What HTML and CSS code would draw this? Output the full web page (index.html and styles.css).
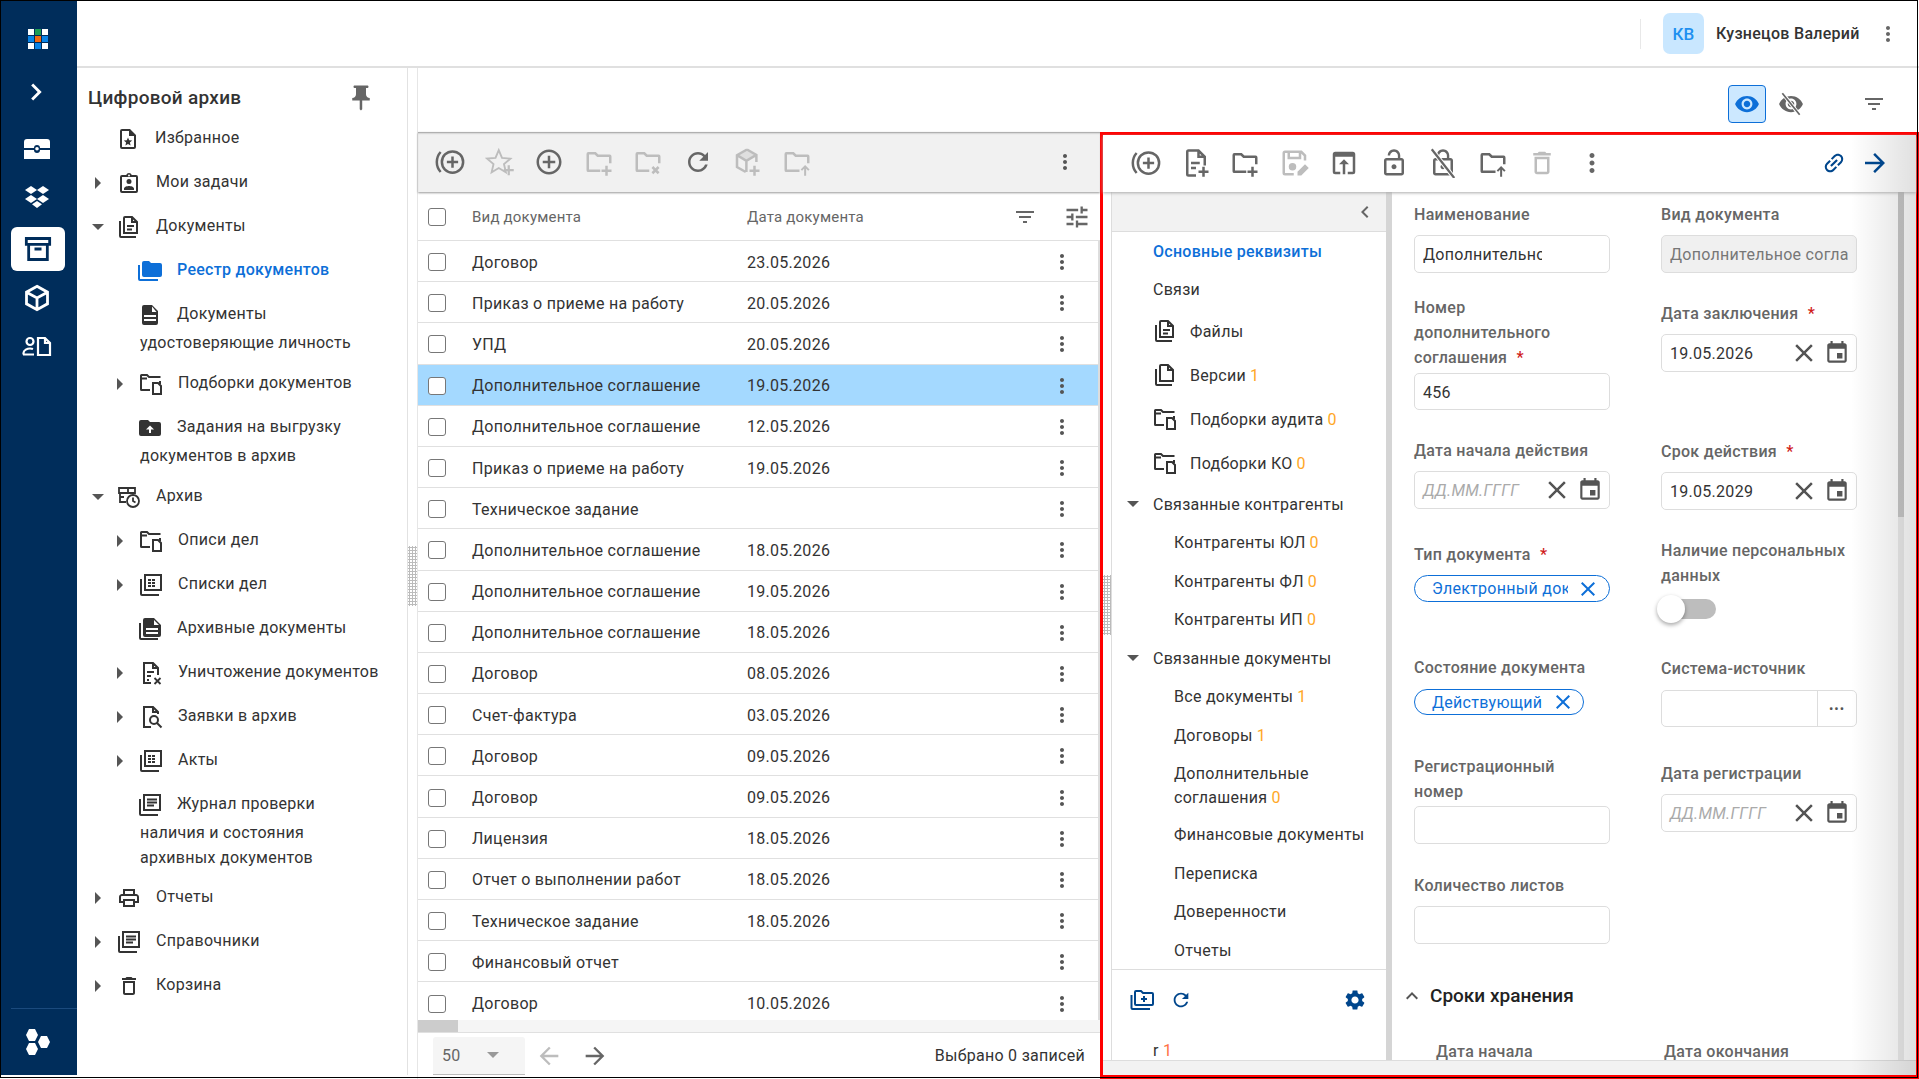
FILE: index.html
```html
<!DOCTYPE html>
<html lang="ru">
<head>
    <meta charset="UTF-8">
    <title>Цифровой архив</title>
    <link rel="stylesheet" href="styles.css">
</head>
<body>
    <svg class="sprite" xmlns="http://www.w3.org/2000/svg">
        <symbol id="i-kebab" viewBox="0 0 24 24"><path d="M12 8c1.1 0 2-.9 2-2s-.9-2-2-2-2 .9-2 2 .9 2 2 2zm0 2c-1.1 0-2 .9-2 2s.9 2 2 2 2-.9 2-2-.9-2-2-2zm0 6c-1.1 0-2 .9-2 2s.9 2 2 2 2-.9 2-2-.9-2-2-2z"/></symbol>
        <symbol id="i-filter" viewBox="0 0 24 24"><path d="M10 18h4v-2h-4v2zM3 6v2h18V6H3zm3 7h12v-2H6v2z"/></symbol>
        <symbol id="i-tune" viewBox="0 0 24 24"><path d="M3 17v2h6v-2H3zM3 5v2h10V5H3zm10 16v-2h8v-2h-8v-2h-2v6h2zM7 9v2H3v2h4v2h2V9H7zm14 4v-2H11v2h10zm-6-4h2V7h4V5h-4V3h-2v6z"/></symbol>
        <symbol id="i-eye" viewBox="0 0 24 24"><path d="M12 4.500C7 4.500 2.730 7.610 1 12c1.730 4.390 6 7.500 11 7.500s9.270-3.110 11-7.500c-1.730-4.390-6-7.500-11-7.500zM12 17c-2.760 0-5-2.240-5-5s2.240-5 5-5 5 2.240 5 5-2.240 5-5 5zm0-8c-1.660 0-3 1.340-3 3s1.340 3 3 3 3-1.340 3-3-1.340-3-3-3z"/></symbol>
        <symbol id="i-eye-off" viewBox="0 0 24 24"><path d="M12 4.500C7 4.500 2.730 7.610 1 12c1.730 4.390 6 7.500 11 7.500s9.270-3.110 11-7.500c-1.730-4.390-6-7.500-11-7.500zM12 17c-2.760 0-5-2.240-5-5s2.240-5 5-5 5 2.240 5 5-2.240 5-5 5zm0-8c-1.660 0-3 1.340-3 3s1.340 3 3 3 3-1.340 3-3-1.340-3-3-3z"/><path d="M4.500 2.500l15 19" fill="none" stroke="#fff" stroke-width="3.400"/><path d="M4 2l16 20" fill="none" stroke="currentColor" stroke-width="1.600"/></symbol>
        <symbol id="i-arrow-right" viewBox="0 0 24 24"><path d="M12 4l-1.410 1.410L16.170 11H4v2h12.170l-5.580 5.590L12 20l8-8z"/></symbol>
        <symbol id="i-arrow-left" viewBox="0 0 24 24"><path d="M20 11H7.830l5.590-5.590L12 4l-8 8 8 8 1.410-1.410L7.830 13H20v-2z"/></symbol>
        <symbol id="i-close" viewBox="0 0 24 24"><path d="M19 6.410L17.590 5 12 10.590 6.410 5 5 6.410 10.590 12 5 17.590 6.410 19 12 13.410 17.590 19 19 17.590 13.410 12z"/></symbol>
        <symbol id="i-refresh" viewBox="0 0 24 24"><path d="M17.650 6.350C16.200 4.900 14.210 4 12 4c-4.420 0-7.990 3.580-7.990 8s3.570 8 7.990 8c3.730 0 6.840-2.550 7.730-6h-2.080c-.82 2.330-3.040 4-5.650 4-3.310 0-6-2.690-6-6s2.690-6 6-6c1.660 0 3.140.69 4.220 1.780L13 11h7V4l-2.350 2.350z"/></symbol>
        <symbol id="i-gear" viewBox="0 0 24 24"><path d="M19.140 12.940c.04-.3.06-.61.06-.94 0-.32-.02-.64-.07-.94l2.030-1.580c.18-.14.23-.41.12-.61l-1.920-3.320c-.12-.22-.37-.29-.59-.22l-2.390.96c-.5-.38-1.030-.7-1.620-.94l-.36-2.540c-.04-.24-.24-.41-.48-.41h-3.840c-.24 0-.43.17-.47.41l-.36 2.540c-.59.24-1.130.57-1.620.94l-2.390-.96c-.22-.08-.47 0-.59.22L2.740 8.870c-.12.21-.08.47.12.61l2.030 1.580c-.05.3-.09.63-.09.94s.02.64.07.94l-2.030 1.580c-.18.14-.23.41-.12.61l1.920 3.320c.12.22.37.29.59.22l2.390-.96c.5.38 1.030.7 1.620.94l.36 2.540c.05.24.24.41.48.41h3.840c.24 0 .44-.17.47-.41l.36-2.540c.59-.24 1.130-.56 1.620-.94l2.390.96c.22.08.47 0 .59-.22l1.920-3.320c.12-.22.07-.47-.12-.61l-2.010-1.580zM12 15.600c-1.980 0-3.600-1.620-3.600-3.600s1.620-3.600 3.600-3.600 3.600 1.620 3.600 3.600-1.620 3.600-3.600 3.600z"/></symbol>
        <symbol id="i-pin" viewBox="0 0 24 24"><path d="M16 9V4h1c.55 0 1-.45 1-1s-.45-1-1-1H7c-.55 0-1 .45-1 1s.45 1 1 1h1v5c0 1.660-1.340 3-3 3v2h5.970v7l1 1 1-1v-7H19v-2c-1.660 0-3-1.340-3-3z"/></symbol>
        <symbol id="i-event" viewBox="0 0 24 24"><path d="M17 12h-5v5h5v-5zM16 1v2H8V1H6v2H5c-1.110 0-1.990.9-1.990 2L3 19c0 1.100.89 2 2 2h14c1.100 0 2-.9 2-2V5c0-1.100-.9-2-2-2h-1V1h-2zm3 18H5V8h14v11z"/></symbol>
        <symbol id="i-link" viewBox="0 0 24 24"><g transform="rotate(-45 12 12)"><path d="M3.900 12c0-1.710 1.390-3.100 3.100-3.100h4V7H7c-2.760 0-5 2.240-5 5s2.240 5 5 5h4v-1.900H7c-1.710 0-3.100-1.390-3.100-3.100zM8 13h8v-2H8v2zm9-6h-4v1.900h4c1.710 0 3.100 1.390 3.100 3.100s-1.390 3.100-3.100 3.100h-4V17h4c2.760 0 5-2.240 5-5s-2.240-5-5-5z"/></g></symbol>
        <symbol id="i-caret-down" viewBox="0 0 24 24"><path d="M6 9l6 6 6-6z"/></symbol>
        <symbol id="i-caret-right" viewBox="0 0 24 24"><path d="M9 6l6 6-6 6z"/></symbol>
        <symbol id="i-star-add" viewBox="0 0 24 24"><path d="M11 2.500l2.600 6.200 6.700.6-5.100 4.400 1.500 6.500-5.700-3.400-5.700 3.400 1.500-6.500L1.700 9.300l6.700-.6z" fill="none" stroke="currentColor" stroke-width="1.500"/><path d="M19 14.500v8M15 18.500h8" fill="none" stroke="currentColor" stroke-width="1.800"/></symbol>
        <symbol id="i-ring-add" viewBox="0 0 24 24"><g fill="none" stroke="currentColor" stroke-width="2"><circle cx="14" cy="12" r="8.500"/><path d="M14 7.500v9M9.500 12h9M4.500 4a12 12 0 0 0 0 16"/></g></symbol>
        <symbol id="i-circle-add" viewBox="0 0 24 24"><path d="M13 7h-2v4H7v2h4v4h2v-4h4v-2h-4V7zm-1-5C6.480 2 2 6.480 2 12s4.480 10 10 10 10-4.480 10-10S17.520 2 12 2zm0 18c-4.410 0-8-3.590-8-8s3.590-8 8-8 8 3.590 8 8-3.590 8-8 8z"/></symbol>
        <symbol id="i-folder-add" viewBox="0 0 24 24"><g fill="none" stroke="currentColor" stroke-width="2"><path d="M13 19H3.500a.5.500 0 0 1-.5-.5V5.500a.5.500 0 0 1 .5-.5H9l2 2h9.500a.5.500 0 0 1 .5.500V13"/><path d="M18 15v8M14 19h8"/></g></symbol>
        <symbol id="i-folder-x" viewBox="0 0 24 24"><g fill="none" stroke="currentColor" stroke-width="2"><path d="M13 19H3.500a.5.500 0 0 1-.5-.5V5.500a.5.500 0 0 1 .5-.5H9l2 2h9.500a.5.500 0 0 1 .5.500V13"/><path d="M15.500 16l5 5M20.500 16l-5 5"/></g></symbol>
        <symbol id="i-folder-up" viewBox="0 0 24 24"><g fill="none" stroke="currentColor" stroke-width="2"><path d="M14 19H3.500a.5.500 0 0 1-.5-.5V5.500a.5.500 0 0 1 .5-.5H9l2 2h9.500a.5.500 0 0 1 .5.500V13"/><path d="M18.500 23v-7M15.500 18.500l3-3 3 3" stroke-width="1.600"/></g></symbol>
        <symbol id="i-box-add" viewBox="0 0 24 24"><g fill="none" stroke="currentColor" stroke-width="2"><path d="M12 2l7.500 4.300V12M12 2L4 6.500v9.500l7 4M4 6.500l7.500 4.500 8-4.700M11.500 11v9"/></g><path d="M12 2l7.500 4.300-8 4.700L4 6.500z" fill="currentColor" opacity=".35"/><path d="M18 15v8M14 19h8" fill="none" stroke="currentColor" stroke-width="2"/></symbol>
        <symbol id="i-doc-add" viewBox="0 0 24 24"><g fill="none" stroke="currentColor" stroke-width="2"><path d="M12 22H6a1 1 0 0 1-1-1V3a1 1 0 0 1 1-1h8l5 5v7M14 2v5h5M8 12h7M8 16h4M18 15v8M14 19h8"/></g></symbol>
        <symbol id="i-save-edit" viewBox="0 0 24 24"><g fill="none" stroke="currentColor" stroke-width="2"><path d="M11 21H4a1 1 0 0 1-1-1V4a1 1 0 0 1 1-1h13l3 3v4M7 3v5h9V3"/></g><circle cx="10" cy="15" r="3" fill="currentColor"/><path d="M14 22v-3l6-6 3 3-6 6z" fill="currentColor"/></symbol>
        <symbol id="i-upload" viewBox="0 0 24 24"><path d="M19 3H5a2 2 0 0 0-2 2v14a2 2 0 0 0 2 2h4v-2H5V7h14v12h-4v2h4a2 2 0 0 0 2-2V5a2 2 0 0 0-2-2zm-7 6l-4 4h3v8h2v-8h3z"/></symbol>
        <symbol id="i-lock-open" viewBox="0 0 24 24"><path d="M12 17c1.100 0 2-.9 2-2s-.9-2-2-2-2 .9-2 2 .9 2 2 2zm6-9h-1V6c0-2.760-2.240-5-5-5S7 3.240 7 6h1.900c0-1.710 1.390-3.100 3.100-3.100 1.710 0 3.100 1.390 3.100 3.100v2H6c-1.100 0-2 .9-2 2v10c0 1.100.9 2 2 2h12c1.100 0 2-.9 2-2V10c0-1.100-.9-2-2-2zm0 12H6V10h12v10z"/></symbol>
        <symbol id="i-lock-off" viewBox="0 0 24 24"><path d="M12 17c1.100 0 2-.9 2-2s-.9-2-2-2-2 .9-2 2 .9 2 2 2zm6-9h-1V6c0-2.760-2.240-5-5-5S7 3.240 7 6v2H6c-1.100 0-2 .9-2 2v10c0 1.100.9 2 2 2h12c1.100 0 2-.9 2-2V10c0-1.100-.9-2-2-2zM8.900 6c0-1.710 1.390-3.100 3.100-3.100s3.100 1.390 3.100 3.100v2H8.900V6zM18 20H6V10h12v10z"/><path d="M3 1l18 23" fill="none" stroke="#fff" stroke-width="3.500"/><path d="M3 1l18 23" fill="none" stroke="currentColor" stroke-width="1.800"/></symbol>
        <symbol id="i-trash" viewBox="0 0 24 24"><path d="M6 19c0 1.100.9 2 2 2h8c1.100 0 2-.9 2-2V7H6v12zM8 9h8v10H8V9zm7.500-5l-1-1h-5l-1 1H5v2h14V4z"/></symbol>
        <symbol id="i-print" viewBox="0 0 24 24"><path d="M19 8h-1V3H6v5H5c-1.660 0-3 1.340-3 3v6h4v4h12v-4h4v-6c0-1.660-1.340-3-3-3zM8 5h8v3H8V5zm8 12v2H8v-4h8v2zm2-2v-2H6v2H4v-4c0-.55.45-1 1-1h14c.55 0 1 .45 1 1v4h-2z"/></symbol>
        <symbol id="i-doc-star" viewBox="0 0 24 24"><path d="M14 2H6a2 2 0 0 0-2 2v16a2 2 0 0 0 2 2h12a2 2 0 0 0 2-2V8zm4 18H6V4h7v5h5z"/><path d="M12 10.500l1.200 2.800 3 .2-2.300 2 .7 2.900-2.600-1.500-2.600 1.500.7-2.900-2.300-2 3-.2z"/></symbol>
        <symbol id="i-clipboard" viewBox="0 0 24 24"><path d="M19 4h-4.200a3 3 0 0 0-5.600 0H5a2 2 0 0 0-2 2v14a2 2 0 0 0 2 2h14a2 2 0 0 0 2-2V6a2 2 0 0 0-2-2zm-7-.5a1 1 0 1 1 0 2 1 1 0 0 1 0-2zM19 20H5V6h14zM12 8a2.500 2.500 0 1 0 0 5 2.500 2.500 0 0 0 0-5zm-5 9.500V19h10v-1.500c0-1.700-3.300-2.500-5-2.500s-5 .8-5 2.500z"/></symbol>
        <symbol id="i-docs" viewBox="0 0 24 24"><g fill="none" stroke="currentColor" stroke-width="2"><path d="M3 6v15a1 1 0 0 0 1 1h15M8 2h7l5 5v11H7V3a1 1 0 0 1 1-1zM15 2v5h5"/><path d="M10 11h7M10 14.500h5"/></g></symbol>
        <symbol id="i-page" viewBox="0 0 24 24"><g fill="none" stroke="currentColor" stroke-width="2"><path d="M3 6v15a1 1 0 0 0 1 1h15M8 2h7l5 5v11H7V3a1 1 0 0 1 1-1zM15 2v5h5"/></g></symbol>
        <symbol id="i-folders-solid" viewBox="0 0 24 24"><path d="M2 6H0v14a2 2 0 0 0 2 2h18v-2H2z"/><path d="M22 4H13l-2-2H6a2 2 0 0 0-2 2v12a2 2 0 0 0 2 2h16a2 2 0 0 0 2-2V6a2 2 0 0 0-2-2z"/></symbol>
        <symbol id="i-doc-solid" viewBox="0 0 24 24"><path d="M14 2H6a2 2 0 0 0-2 2v16a2 2 0 0 0 2 2h12a2 2 0 0 0 2-2V8zm-8 16v-2h12v2zm0-4v-2h12v2zm8-5V3.500L18.500 9z"/></symbol>
        <symbol id="i-folder-doc" viewBox="0 0 24 24"><g fill="none" stroke="currentColor" stroke-width="2"><path d="M11 18H2.500a.5.500 0 0 1-.5-.5V3.500a.5.500 0 0 1 .5-.5H8l2 2h11.500M2 6.500h6M21 9v3"/><path d="M14 11h5l3 3v8h-8z"/></g></symbol>
        <symbol id="i-folder-up-solid" viewBox="0 0 24 24"><path d="M10 4H3a2 2 0 0 0-2 2v12a2 2 0 0 0 2 2h18a2 2 0 0 0 2-2V8a2 2 0 0 0-2-2H12zM12 9.500l4 4h-3V17h-2v-3.500H8z"/></symbol>
        <symbol id="i-archive-clock" viewBox="0 0 24 24"><g fill="none" stroke="currentColor" stroke-width="1.800"><path d="M2 3h16v5H2zM3 8v9h6M7 12H3M11 3v5"/><circle cx="16" cy="16" r="6"/><path d="M16 12.500V16l2.500 1.500"/></g></symbol>
        <symbol id="i-list-grid" viewBox="0 0 24 24"><g fill="none" stroke="currentColor" stroke-width="2"><path d="M2 6v15a1 1 0 0 0 1 1h17M6 2h16v15H6z"/></g><path d="M9 6h3v2H9zM13 6h3v2h-3zM9 9h3v2H9zM13 9h3v2h-3zM9 12h3v2H9zM13 12h3v2h-3z"/></symbol>
        <symbol id="i-docs-solid" viewBox="0 0 24 24"><path d="M3 6H1v15a2 2 0 0 0 2 2h17v-2H3z"/><path d="M16 1H7a2 2 0 0 0-2 2v15a2 2 0 0 0 2 2h14a2 2 0 0 0 2-2V8zM8 17v-2h12v2zm0-4v-2h12v2zm8-5V3l5 5z"/></symbol>
        <symbol id="i-doc-x" viewBox="0 0 24 24"><g fill="none" stroke="currentColor" stroke-width="2"><path d="M12 22H5V2h9l5 5v7M14 2v5h5M8 11h7M8 15h4M8 19h2"/></g><path d="M15.500 17l6 6M21.500 17l-6 6" fill="none" stroke="currentColor" stroke-width="1.800"/></symbol>
        <symbol id="i-doc-search" viewBox="0 0 24 24"><g fill="none" stroke="currentColor" stroke-width="2"><path d="M12 22H5V2h9l5 5v2M14 2v5h5"/><circle cx="15" cy="15" r="4"/><path d="M18 18l4.500 4.500"/></g></symbol>
        <symbol id="i-list-lines" viewBox="0 0 24 24"><g fill="none" stroke="currentColor" stroke-width="2"><path d="M2 6v15a1 1 0 0 0 1 1h17M6 2h16v15H6z"/><path d="M9 6.500h10M9 9.500h10M9 12.500h7"/></g></symbol>
        <symbol id="i-folders-add" viewBox="0 0 24 24"><g fill="none" stroke="currentColor" stroke-width="2"><path d="M1.500 7v13a1 1 0 0 0 1 1H20"/><path d="M6 3h5l2 2h9a1 1 0 0 1 1 1v10a1 1 0 0 1-1 1H6a1 1 0 0 1-1-1V4a1 1 0 0 1 1-1z"/><path d="M14 8v6M11 11h6"/></g></symbol>
    </svg>

    <div class="app">
        <nav class="rail">
            <div class="rail-logo">
                <i class="w"></i><i class="g"></i><i class="w"></i>
                <i class="b"></i><i class="o"></i><i class="b"></i>
                <i class="w"></i><i class="b"></i><i class="w"></i>
            </div>
            <svg class="rail-chevron" viewBox="0 0 24 24"><path d="M10 6L8.590 7.410 13.170 12l-4.580 4.590L10 18l6-6z"/></svg>
            <svg class="rail-icon" viewBox="0 0 26 22"><path d="M3 1h20a3 3 0 0 1 3 3v6H16a3 3 0 0 0-6 0H0V4a3 3 0 0 1 3-3zM0 12h10a3 3 0 0 0 6 0h10v9H0zM13 9a1.800 1.800 0 1 1 0 3.600A1.800 1.800 0 0 1 13 9z"/></svg>
            <svg class="rail-icon" viewBox="0 0 26 22"><path d="M7 0l6 4-6 4-6-4zM19 0l6 4-6 4-6-4zM7 9l6 4-6 4-6-4zM19 9l6 4-6 4-6-4zM13 15l5 3.200L13 22l-5-3.800z"/></svg>
            <div class="rail-active">
                <svg viewBox="0 0 24 24" fill="none" stroke="#002d5b" stroke-width="2.400"><path d="M2 3h20v5H2zM4 8v13h16V8M9 12h6"/></svg>
            </div>
            <svg class="rail-icon cube" viewBox="0 0 24 24" stroke="#fff" stroke-width="2.400"><path d="M12 2l9 5v10l-9 5-9-5V7zM3 7l9 5 9-5M12 12v10"/></svg>
            <svg class="rail-icon person" viewBox="0 0 30 20" stroke="#fff" stroke-width="2.200"><circle cx="8" cy="5.500" r="3.500"/><path d="M1.500 18.500v-1.500c0-3 4-4.500 6.500-4.500 1.200 0 2.200.2 3 .5M1 18.500h11"/><path d="M16 2h7l5 5v12H16zM23 2v5h5"/></svg>
            <div class="rail-spacer"></div>
            <div class="rail-foot">
                <svg viewBox="0 0 24 26" fill="#fff"><path d="M3 0h6l3 6-3 6H3L0 6zM3 14h6l3 6-3 6H3l-3-6zM15 7h6l3 6-3 6h-6l-3-6z"/></svg>
            </div>
        </nav>

        <div class="main">
            <header class="topbar">
                <div class="top-divider"></div>
                <div class="avatar">КВ</div>
                <div class="user-name">Кузнецов Валерий</div>
                <svg class="ico top-kebab"><use href="#i-kebab"/></svg>
            </header>

            <div class="content">
                <aside class="tree">
                    <div class="tree-head">
                        <span>Цифровой архив</span>
                        <svg class="ico tree-pin"><use href="#i-pin"/></svg>
                    </div>
                    <div class="node l1"><svg class="ico node-ico"><use href="#i-doc-star"/></svg>Избранное</div>
                    <div class="node l1"><svg class="ico caret"><use href="#i-caret-right"/></svg><svg class="ico node-ico"><use href="#i-clipboard"/></svg>Мои задачи</div>
                    <div class="node l1"><svg class="ico caret"><use href="#i-caret-down"/></svg><svg class="ico node-ico"><use href="#i-docs"/></svg>Документы</div>
                    <div class="node l2 current"><svg class="ico node-ico"><use href="#i-folders-solid"/></svg>Реестр документов</div>
                    <div class="node l2"><svg class="ico node-ico"><use href="#i-doc-solid"/></svg>Документы<br>удостоверяющие личность</div>
                    <div class="node l2"><svg class="ico caret"><use href="#i-caret-right"/></svg><svg class="ico node-ico"><use href="#i-folder-doc"/></svg>Подборки документов</div>
                    <div class="node l2"><svg class="ico node-ico"><use href="#i-folder-up-solid"/></svg>Задания на выгрузку<br>документов в архив</div>
                    <div class="node l1"><svg class="ico caret"><use href="#i-caret-down"/></svg><svg class="ico node-ico"><use href="#i-archive-clock"/></svg>Архив</div>
                    <div class="node l2"><svg class="ico caret"><use href="#i-caret-right"/></svg><svg class="ico node-ico"><use href="#i-folder-doc"/></svg>Описи дел</div>
                    <div class="node l2"><svg class="ico caret"><use href="#i-caret-right"/></svg><svg class="ico node-ico"><use href="#i-list-grid"/></svg>Списки дел</div>
                    <div class="node l2"><svg class="ico node-ico"><use href="#i-docs-solid"/></svg>Архивные документы</div>
                    <div class="node l2"><svg class="ico caret"><use href="#i-caret-right"/></svg><svg class="ico node-ico"><use href="#i-doc-x"/></svg>Уничтожение документов</div>
                    <div class="node l2"><svg class="ico caret"><use href="#i-caret-right"/></svg><svg class="ico node-ico"><use href="#i-doc-search"/></svg>Заявки в архив</div>
                    <div class="node l2"><svg class="ico caret"><use href="#i-caret-right"/></svg><svg class="ico node-ico"><use href="#i-list-grid"/></svg>Акты</div>
                    <div class="node l2 tight"><svg class="ico node-ico"><use href="#i-list-lines"/></svg>Журнал проверки<br>наличия и состояния<br>архивных документов</div>
                    <div class="node l1"><svg class="ico caret"><use href="#i-caret-right"/></svg><svg class="ico node-ico"><use href="#i-print"/></svg>Отчеты</div>
                    <div class="node l1"><svg class="ico caret"><use href="#i-caret-right"/></svg><svg class="ico node-ico"><use href="#i-list-lines"/></svg>Справочники</div>
                    <div class="node l1"><svg class="ico caret"><use href="#i-caret-right"/></svg><svg class="ico node-ico"><use href="#i-trash"/></svg>Корзина</div>
                </aside>
                <div class="grip grip-tree"></div>

                <div class="work">
                    <div class="view-bar">
                        <button class="eye-btn"><svg class="ico"><use href="#i-eye"/></svg></button>
                        <svg class="ico eye-off"><use href="#i-eye-off"/></svg>
                        <svg class="ico view-filter"><use href="#i-filter"/></svg>
                    </div>

                    <div class="panes">
                        <section class="registry">
                            <div class="reg-tools">
                                <svg class="ico tool"><use href="#i-ring-add"/></svg>
                                <svg class="ico tool off"><use href="#i-star-add"/></svg>
                                <svg class="ico tool"><use href="#i-circle-add"/></svg>
                                <svg class="ico tool off"><use href="#i-folder-add"/></svg>
                                <svg class="ico tool off"><use href="#i-folder-x"/></svg>
                                <svg class="ico tool"><use href="#i-refresh"/></svg>
                                <svg class="ico tool off"><use href="#i-box-add"/></svg>
                                <svg class="ico tool off"><use href="#i-folder-up"/></svg>
                                <svg class="ico tool-kebab"><use href="#i-kebab"/></svg>
                            </div>
                            <div class="reg-head">
                                <span class="check"></span>
                                <span class="col-kind">Вид документа</span>
                                <span class="col-date">Дата документа</span>
                                <svg class="ico head-filter"><use href="#i-filter"/></svg>
                                <svg class="ico head-tune"><use href="#i-tune"/></svg>
                            </div>
                            <div class="reg-rows">
                                <div class="row"><span class="check"></span><span class="col-kind">Договор</span><span class="col-date">23.05.2026</span><svg class="ico row-kebab"><use href="#i-kebab"/></svg></div>
                                <div class="row"><span class="check"></span><span class="col-kind">Приказ о приеме на работу</span><span class="col-date">20.05.2026</span><svg class="ico row-kebab"><use href="#i-kebab"/></svg></div>
                                <div class="row"><span class="check"></span><span class="col-kind">УПД</span><span class="col-date">20.05.2026</span><svg class="ico row-kebab"><use href="#i-kebab"/></svg></div>
                                <div class="row selected"><span class="check"></span><span class="col-kind">Дополнительное соглашение</span><span class="col-date">19.05.2026</span><svg class="ico row-kebab"><use href="#i-kebab"/></svg></div>
                                <div class="row"><span class="check"></span><span class="col-kind">Дополнительное соглашение</span><span class="col-date">12.05.2026</span><svg class="ico row-kebab"><use href="#i-kebab"/></svg></div>
                                <div class="row"><span class="check"></span><span class="col-kind">Приказ о приеме на работу</span><span class="col-date">19.05.2026</span><svg class="ico row-kebab"><use href="#i-kebab"/></svg></div>
                                <div class="row"><span class="check"></span><span class="col-kind">Техническое задание</span><span class="col-date"></span><svg class="ico row-kebab"><use href="#i-kebab"/></svg></div>
                                <div class="row"><span class="check"></span><span class="col-kind">Дополнительное соглашение</span><span class="col-date">18.05.2026</span><svg class="ico row-kebab"><use href="#i-kebab"/></svg></div>
                                <div class="row"><span class="check"></span><span class="col-kind">Дополнительное соглашение</span><span class="col-date">19.05.2026</span><svg class="ico row-kebab"><use href="#i-kebab"/></svg></div>
                                <div class="row"><span class="check"></span><span class="col-kind">Дополнительное соглашение</span><span class="col-date">18.05.2026</span><svg class="ico row-kebab"><use href="#i-kebab"/></svg></div>
                                <div class="row"><span class="check"></span><span class="col-kind">Договор</span><span class="col-date">08.05.2026</span><svg class="ico row-kebab"><use href="#i-kebab"/></svg></div>
                                <div class="row"><span class="check"></span><span class="col-kind">Счет-фактура</span><span class="col-date">03.05.2026</span><svg class="ico row-kebab"><use href="#i-kebab"/></svg></div>
                                <div class="row"><span class="check"></span><span class="col-kind">Договор</span><span class="col-date">09.05.2026</span><svg class="ico row-kebab"><use href="#i-kebab"/></svg></div>
                                <div class="row"><span class="check"></span><span class="col-kind">Договор</span><span class="col-date">09.05.2026</span><svg class="ico row-kebab"><use href="#i-kebab"/></svg></div>
                                <div class="row"><span class="check"></span><span class="col-kind">Лицензия</span><span class="col-date">18.05.2026</span><svg class="ico row-kebab"><use href="#i-kebab"/></svg></div>
                                <div class="row"><span class="check"></span><span class="col-kind">Отчет о выполнении работ</span><span class="col-date">18.05.2026</span><svg class="ico row-kebab"><use href="#i-kebab"/></svg></div>
                                <div class="row"><span class="check"></span><span class="col-kind">Техническое задание</span><span class="col-date">18.05.2026</span><svg class="ico row-kebab"><use href="#i-kebab"/></svg></div>
                                <div class="row"><span class="check"></span><span class="col-kind">Финансовый отчет</span><span class="col-date"></span><svg class="ico row-kebab"><use href="#i-kebab"/></svg></div>
                                <div class="row last"><span class="check"></span><span class="col-kind">Договор</span><span class="col-date">10.05.2026</span><svg class="ico row-kebab"><use href="#i-kebab"/></svg></div>
                            </div>
                            <div class="hscroll"><div class="hscroll-thumb"></div></div>
                            <div class="reg-foot">
                                <div class="page-size">50<svg class="ico"><use href="#i-caret-down"/></svg></div>
                                <svg class="ico page-prev"><use href="#i-arrow-left"/></svg>
                                <svg class="ico page-next"><use href="#i-arrow-right"/></svg>
                                <span class="picked">Выбрано 0 записей</span>
                            </div>
                        </section>

                        <section class="detail">
                            <div class="detail-tools">
                                <svg class="ico tool"><use href="#i-ring-add"/></svg>
                                <svg class="ico tool"><use href="#i-doc-add"/></svg>
                                <svg class="ico tool"><use href="#i-folder-add"/></svg>
                                <svg class="ico tool off"><use href="#i-save-edit"/></svg>
                                <svg class="ico tool"><use href="#i-upload"/></svg>
                                <svg class="ico tool"><use href="#i-lock-open"/></svg>
                                <svg class="ico tool"><use href="#i-lock-off"/></svg>
                                <svg class="ico tool"><use href="#i-folder-up"/></svg>
                                <svg class="ico tool off"><use href="#i-trash"/></svg>
                                <svg class="ico tool"><use href="#i-kebab"/></svg>
                                <svg class="ico tool-link"><use href="#i-link"/></svg>
                                <svg class="ico tool-go"><use href="#i-arrow-right"/></svg>
                            </div>
                            <div class="detail-body">
                                <div class="grip grip-detail"></div>
                                <div class="links">
                                    <div class="links-head"><svg viewBox="0 0 24 24"><path d="M15.410 7.410L14 6l-6 6 6 6 1.410-1.410L10.830 12z"/></svg></div>
                                    <div class="links-list">
                                        <div class="link-item active">Основные реквизиты</div>
                                        <div class="link-item">Связи</div>
                                        <div class="link-item icon"><svg class="ico link-ico"><use href="#i-docs"/></svg>Файлы</div>
                                        <div class="link-item icon"><svg class="ico link-ico"><use href="#i-page"/></svg>Версии <b>1</b></div>
                                        <div class="link-item icon"><svg class="ico link-ico"><use href="#i-folder-doc"/></svg>Подборки аудита <b>0</b></div>
                                        <div class="link-item icon"><svg class="ico link-ico"><use href="#i-folder-doc"/></svg>Подборки КО <b>0</b></div>
                                        <div class="link-item group"><svg class="ico link-caret"><use href="#i-caret-down"/></svg>Связанные контрагенты</div>
                                        <div class="link-item sub">Контрагенты ЮЛ <b>0</b></div>
                                        <div class="link-item sub">Контрагенты ФЛ <b>0</b></div>
                                        <div class="link-item sub">Контрагенты ИП <b>0</b></div>
                                        <div class="link-item group"><svg class="ico link-caret"><use href="#i-caret-down"/></svg>Связанные документы</div>
                                        <div class="link-item sub">Все документы <b>1</b></div>
                                        <div class="link-item sub">Договоры <b>1</b></div>
                                        <div class="link-item sub wrap">Дополнительные<br>соглашения <b>0</b></div>
                                        <div class="link-item sub">Финансовые документы</div>
                                        <div class="link-item sub">Переписка</div>
                                        <div class="link-item sub">Доверенности</div>
                                        <div class="link-item sub">Отчеты</div>
                                    </div>
                                    <div class="links-foot">
                                        <svg class="ico"><use href="#i-folders-add"/></svg>
                                        <svg class="ico foot-refresh"><use href="#i-refresh"/></svg>
                                        <svg class="ico foot-gear"><use href="#i-gear"/></svg>
                                    </div>
                                    <div class="links-extra">r <b>1</b></div>
                                </div>

                                <div class="form-wrap">
                                    <div class="form">
                                        <div class="fields">
                                            <div class="form-col">
                                                <div class="field f-first">
                                                    <label>Наименование</label>
                                                    <div class="input"><span class="clip-name">Дополнительное соглашение</span></div>
                                                </div>
                                                <div class="field f-number">
                                                    <label>Номер<br>дополнительного<br>соглашения <em>*</em></label>
                                                    <div class="input">456</div>
                                                </div>
                                                <div class="field f-start">
                                                    <label>Дата начала действия</label>
                                                    <div class="input date"><span class="hint">ДД.ММ.ГГГГ</span><svg class="ico"><use href="#i-close"/></svg><svg class="ico cal"><use href="#i-event"/></svg></div>
                                                </div>
                                                <div class="field f-type">
                                                    <label>Тип документа <em>*</em></label>
                                                    <div class="chip full"><span class="chip-text">Электронный документ</span><svg class="ico"><use href="#i-close"/></svg></div>
                                                </div>
                                                <div class="field f-state">
                                                    <label>Состояние документа</label>
                                                    <div class="chip short"><span>Действующий</span><svg class="ico"><use href="#i-close"/></svg></div>
                                                </div>
                                                <div class="field f-reg">
                                                    <label>Регистрационный<br>номер</label>
                                                    <div class="input"></div>
                                                </div>
                                                <div class="field f-count">
                                                    <label>Количество листов</label>
                                                    <div class="input"></div>
                                                </div>
                                            </div>
                                            <div class="form-col">
                                                <div class="field f-first">
                                                    <label>Вид документа</label>
                                                    <div class="input disabled"><span class="clip">Дополнительное соглашение</span></div>
                                                </div>
                                                <div class="field f-signed">
                                                    <label>Дата заключения <em>*</em></label>
                                                    <div class="input date"><span>19.05.2026</span><svg class="ico"><use href="#i-close"/></svg><svg class="ico cal"><use href="#i-event"/></svg></div>
                                                </div>
                                                <div class="field f-term">
                                                    <label>Срок действия <em>*</em></label>
                                                    <div class="input date"><span>19.05.2029</span><svg class="ico"><use href="#i-close"/></svg><svg class="ico cal"><use href="#i-event"/></svg></div>
                                                </div>
                                                <div class="field f-personal">
                                                    <label>Наличие персональных<br>данных</label>
                                                    <div class="toggle"><i></i></div>
                                                </div>
                                                <div class="field f-source">
                                                    <label>Система-источник</label>
                                                    <div class="input pick"><span></span><div class="pick-btn">•••</div></div>
                                                </div>
                                                <div class="field f-regdate">
                                                    <label>Дата регистрации</label>
                                                    <div class="input date"><span class="hint">ДД.ММ.ГГГГ</span><svg class="ico"><use href="#i-close"/></svg><svg class="ico cal"><use href="#i-event"/></svg></div>
                                                </div>
                                            </div>
                                        </div>
                                        <h3 class="section-title"><svg viewBox="0 0 24 24"><path d="M12 8l-6 6 1.410 1.410L12 10.830l4.590 4.580L18 14z"/></svg>Сроки хранения</h3>
                                        <div class="terms">
                                            <label>Дата начала</label>
                                            <label>Дата окончания</label>
                                        </div>
                                    </div>
                                    <div class="vscroll"><div class="vscroll-thumb"></div></div>
                                </div>
                            </div>
                            <div class="detail-foot"></div>
                        </section>
                    </div>
                </div>
            </div>
        </div>
    </div>
</body>
</html>
```

FILE: styles.css
```css
* {
    box-sizing: border-box;
}

html, body {
    margin: 0;
    height: 100%;
}

body {
    position: relative;
    width: 1919px;
    height: 1079px;
    overflow: hidden;
    background: #fff;
    color: #333;
    font-family: Roboto, "Noto Sans", sans-serif;
    font-size: 16px;
    letter-spacing: 0.28px;
}

/* thin black edge of the captured window */
body::before {
    content: "";
    position: absolute;
    z-index: 5;
    left: 0;
    top: 0;
    width: 1916px;
    height: 1076px;
    border: 1px solid #000;
    pointer-events: none;
}

.sprite {
    position: absolute;
    width: 0;
    height: 0;
}

.ico {
    width: 24px;
    height: 24px;
    fill: currentColor;
    flex: none;
}

.app {
    display: flex;
    height: 1079px;
}

/* left rail */
.rail {
    width: 77px;
    height: 1075px;
    flex: none;
    padding-right: 3px;
    background: #002d5b;
    display: flex;
    flex-direction: column;
    align-items: center;
}

.rail-logo {
    display: grid;
    grid-template-columns: repeat(3, 6px);
    grid-auto-rows: 6px;
    gap: 1px;
    margin-top: 29px;
    margin-left: 1px;
}

.rail-logo i {
    display: block;
}

.rail-logo .w { background: #fff; }
.rail-logo .g { background: #1f9d55; }
.rail-logo .b { background: #0a84e6; }
.rail-logo .o { background: #f26a12; }

.rail-chevron {
    width: 34px;
    height: 34px;
    margin-top: 26px;
    margin-bottom: 29px;
    margin-left: -2px;
    fill: #fff;
}

.rail-icon {
    width: 26px;
    height: 22px;
    fill: #fff;
    margin-bottom: 26px;
    display: block;
}

.rail-active {
    width: 54px;
    height: 44px;
    margin-top: -7px;
    margin-bottom: 13px;
    margin-left: 2px;
    background: #fff;
    border-radius: 6px;
    display: flex;
    align-items: center;
    justify-content: center;
}

.rail-active svg {
    width: 28px;
    height: 28px;
}

.rail-icon.cube {
    height: 28px;
    width: 28px;
    margin-bottom: 24px;
    fill: none;
}

.rail-icon.person {
    width: 30px;
    height: 20px;
    fill: none;
}

.rail-spacer {
    flex: 1;
}

.rail-foot {
    width: 66px;
    align-self: flex-end;
    margin-right: -3px;
    height: 67px;
    border-top: 1px solid #1b4a7d;
    display: flex;
    align-items: center;
    padding-left: 15px;
}

.rail-foot svg {
    width: 24px;
    height: 26px;
}

/* main */
.main {
    flex: 1;
    min-width: 0;
    display: flex;
    flex-direction: column;
}

.topbar {
    height: 68px;
    flex: none;
    display: flex;
    align-items: center;
    padding-top: 1px;
    border-bottom: 2px solid #e0e0e0;
    padding-left: 1563px;
}

.top-divider {
    width: 1px;
    height: 30px;
    background: #e8e8e8;
    margin-right: 22px;
}

.avatar {
    width: 41px;
    height: 41px;
    border-radius: 7px;
    background: #c9e7ff;
    color: #1e90f0;
    font-weight: 500;
    font-size: 17px;
    display: flex;
    align-items: center;
    justify-content: center;
}

.user-name {
    margin-left: 12px;
    font-weight: 500;
    color: #333;
    white-space: nowrap;
}

.top-kebab {
    margin-left: 16px;
    color: #666;
}

.content {
    flex: 1;
    min-height: 0;
    display: flex;
}

/* tree */
.tree {
    width: 331px;
    flex: none;
    height: 1007px;
    border-right: 1px solid #e2e2e2;
    line-height: 25px;
}

.tree-head {
    display: flex;
    align-items: center;
    justify-content: space-between;
    height: 39px;
    margin-top: 10px;
    padding: 0 31px 0 11px;
    font-size: 19px;
    font-weight: 500;
    color: #333;
}

.tree-pin {
    width: 30px;
    height: 30px;
    color: #666;
}

.node {
    padding: 7px 14px 7px 0;
    color: #333;
    white-space: nowrap;
}

.node.l1 { padding-left: 39px; }
.node.l2 { padding-left: 63px; }

.node.tight {
    padding-bottom: 6px;
}

.node.current {
    color: #0d6fd8;
    font-weight: 500;
}

.node-ico {
    width: 24px;
    height: 24px;
    margin: 3px 15px 3px 0;
    vertical-align: middle;
}

.node.l2 .node-ico {
    margin-left: -2px;
}

.caret {
    width: 24px;
    height: 24px;
    color: #555;
    vertical-align: middle;
    margin: 0 7px 0 -30px;
}

.node.l2 .caret {
    margin: 0 9px 0 -32px;
}

.grip {
    background-image: radial-gradient(#bbb 1.200px, transparent 1.300px);
    background-size: 3px 3px;
}

.grip-tree {
    width: 9px;
    flex: none;
    margin-top: 478px;
    height: 60px;
}

/* work area */
.work {
    flex: 1;
    min-width: 0;
    display: flex;
    flex-direction: column;
    border-left: 1px solid #e6e6e6;
}

.view-bar {
    height: 64px;
    flex: none;
    display: flex;
    align-items: center;
    padding-top: 8px;
    padding-left: 1310px;
    color: #666;
}

.eye-btn {
    width: 38px;
    height: 38px;
    padding: 0;
    border: 1px solid #0d6fd8;
    border-radius: 4px;
    background: #cce8ff;
    color: #0d6fd8;
    display: flex;
    align-items: center;
    justify-content: center;
}

.eye-btn .ico {
    width: 26px;
    height: 26px;
}

.eye-off {
    width: 26px;
    height: 26px;
    margin-left: 12px;
}

.view-filter {
    width: 24px;
    height: 24px;
    margin-left: 58px;
}

.panes {
    flex: 1;
    min-height: 0;
    display: flex;
}

/* registry list */
.registry {
    width: 682px;
    height: 943px;
    flex: none;
    display: flex;
    flex-direction: column;
}

.reg-tools {
    height: 60px;
    flex: none;
    display: flex;
    align-items: center;
    gap: 19.500px;
    padding-left: 17px;
    background: #f1f1f1;
    box-shadow: inset 0 2px 2px -1px #999, 0 1px 2px #999;
    color: #666;
    position: relative;
}

.tool {
    width: 30px;
    height: 30px;
}

.tool.off {
    color: #bdbdbd;
}

.tool-kebab {
    width: 24px;
    height: 24px;
    margin-left: 222px;
    fill: #555;
}

.reg-head,
.row {
    display: flex;
    align-items: center;
    padding-left: 10px;
}

.reg-head {
    height: 49px;
    flex: none;
    padding-top: 1px;
    font-size: 15px;
    letter-spacing: 0.2px;
    color: #666;
    border-bottom: 1px solid #e0e0e0;
}

.check {
    width: 18px;
    height: 18px;
    flex: none;
    border: 1.500px solid #777;
    border-radius: 3px;
    background: #fff;
}

.col-kind {
    width: 275px;
    margin-left: 26px;
    flex: none;
}

.col-date {
    width: 303px;
    flex: none;
}

.head-filter {
    margin-left: -37px;
    color: #666;
}

.head-tune {
    margin-left: 26px;
    color: #666;
    width: 28px;
    height: 28px;
}

.reg-rows {
    border-right: 2px solid #ddd;
}

.row {
    height: 41.200px;
    padding-top: 2px;
    border-bottom: 1px solid #e0e0e0;
    color: #333;
}

.row.last {
    height: 37.400px;
    padding-top: 5px;
    border-bottom: 0;
}

.row.selected {
    background: #a4d9ff;
}

.row-kebab {
    color: #555;
}

.hscroll {
    height: 13px;
    flex: none;
    background: #f5f5f5;
    border-bottom: 1px solid #e0e0e0;
}

.hscroll-thumb {
    width: 40px;
    height: 12px;
    background: #ccc;
}

.reg-foot {
    flex: 1;
    display: flex;
    align-items: center;
    color: #333;
    padding-top: 4px;
    padding-left: 15px;
}

.page-size {
    width: 92px;
    height: 38px;
    background: #f5f5f5;
    border-bottom: 1px solid #bbb;
    border-radius: 3px 3px 0 0;
    display: flex;
    align-items: center;
    padding-left: 9px;
    color: #666;
}

.page-size .ico {
    margin-left: 20px;
    color: #999;
}

.page-prev {
    width: 28px;
    height: 28px;
    margin-left: 10px;
    color: #bdbdbd;
}

.page-next {
    width: 28px;
    height: 28px;
    margin-left: 18px;
    color: #666;
}

.picked {
    margin-left: auto;
    margin-right: 15px;
}

/* detail panel inside the red frame */
.detail {
    flex: 1;
    min-width: 0;
    height: 947px;
    border: 3px solid #f00;
    border-bottom-width: 4px;
    display: flex;
    flex-direction: column;
    position: relative;
    color: #333;
}

.detail::after {
    content: "";
    position: absolute;
    top: 0;
    bottom: 0;
    right: 0;
    width: 65px;
    background: linear-gradient(to right, rgba(0, 0, 0, 0), rgba(0, 0, 0, 0.12));
    pointer-events: none;
}

.detail-tools {
    height: 57px;
    flex: none;
    display: flex;
    align-items: center;
    gap: 19.500px;
    padding-left: 28px;
    padding-bottom: 2px;
    color: #666;
    box-shadow: 0 1px 3px #aaa;
    position: relative;
    z-index: 1;
}

.tool-link {
    width: 26px;
    height: 26px;
    margin-left: 194.500px;
    color: #00468c;
}

.tool-go {
    width: 30px;
    height: 30px;
    margin-left: -6.500px;
    color: #00468c;
}

.detail-body {
    flex: 1;
    min-height: 0;
    display: flex;
}

.grip-detail {
    width: 8px;
    flex: none;
    align-self: flex-start;
    margin-top: 383px;
    height: 60px;
}

.links {
    width: 275px;
    flex: none;
    border-left: 1px solid #ddd;
    display: flex;
    flex-direction: column;
}

.links-head {
    height: 40px;
    flex: none;
    background: #f2f2f2;
    border-bottom: 1px solid #ddd;
    display: flex;
    align-items: center;
    justify-content: flex-end;
    padding-right: 9px;
}

.links-head svg {
    width: 24px;
    height: 24px;
    fill: #666;
}

.links-list {
    height: 738px;
    flex: none;
    border-bottom: 1px solid #ddd;
}

.link-item {
    height: 38.500px;
    display: flex;
    align-items: center;
    flex-wrap: wrap;
    padding-left: 41px;
    gap: 0 4px;
    white-space: nowrap;
}

.link-item b {
    font-weight: 400;
    color: #ffa726;
}

.link-item.active {
    color: #0d6fd8;
    font-weight: 500;
}

.link-item.icon {
    height: 44px;
}

.link-ico {
    margin-right: 9px;
}

.link-item.group {
    padding-left: 9px;
}

.link-caret {
    width: 24px;
    height: 24px;
    color: #555;
    margin-right: 4px;
}

.link-item.sub {
    padding-left: 62px;
}

.link-item.wrap {
    display: block;
    height: 61px;
    line-height: 24px;
    padding-top: 7px;
}

.links-foot {
    height: 60px;
    flex: none;
    display: flex;
    align-items: center;
    padding: 0 19px 0 18px;
    color: #00468c;
}

.foot-refresh {
    width: 22px;
    height: 22px;
    margin-left: 16px;
}

.foot-gear {
    margin-left: auto;
}

.links-extra {
    padding-left: 41px;
    padding-top: 11px;
    color: #333;
}

.links-extra b {
    font-weight: 400;
    color: #ff7043;
}

.form-wrap {
    flex: 1;
    min-width: 0;
    display: flex;
    border-left: 6px solid #d5d5d5;
    overflow: hidden;
}

.form {
    flex: 1;
    min-width: 0;
    padding-left: 22px;
    overflow: hidden;
}

.fields {
    display: flex;
    gap: 51px;
}

.form-col {
    width: 196px;
    flex: none;
}

.field label,
.terms label {
    display: block;
    color: #666;
    font-weight: 500;
    font-size: 16px;
    line-height: 25px;
    white-space: nowrap;
}

.field em {
    font-style: normal;
    color: #d01c1c;
    margin-left: 5px;
}

/* the form keeps its uneven vertical rhythm, field by field */
.f-first { margin-top: 9.500px; }
.f-number { margin-top: 22.500px; }
.f-start { margin-top: 27.500px; }
.f-type { margin-top: 33px; }
.f-state { margin-top: 52.500px; }
.f-reg { margin-top: 38.500px; }
.f-count { margin-top: 28.500px; }
.f-signed { margin-top: 28px; }
.f-term { margin-top: 67px; }
.f-personal { margin-top: 28px; }
.f-source { margin-top: 36.500px; }
.f-regdate { margin-top: 33.500px; }

.input {
    height: 38px;
    border: 1px solid #ddd;
    border-radius: 5px;
    padding: 1px 8px 0;
    display: flex;
    align-items: center;
    overflow: hidden;
    white-space: nowrap;
    background: #fff;
    margin-top: 8px;
    color: #333;
}

.f-number .input {
    margin-top: 3px;
    height: 37px;
}

.f-reg .input {
    margin-top: 2.500px;
}

.f-source .input {
    margin-top: 9.500px;
    height: 37px;
}

.clip-name {
    display: block;
    width: 119px;
    overflow: hidden;
}

.clip {
    display: block;
    width: 179px;
    overflow: hidden;
}

.input.disabled {
    background: #f0f0f0;
    color: #777;
}

.input.date span {
    flex: 1;
}

.input.date .ico {
    width: 30px;
    height: 30px;
    color: #555;
    margin-left: -4px;
}

.input.date .cal {
    margin-left: 5.400px;
    margin-right: -2px;
    width: 26px;
    height: 26px;
}

.hint {
    font-style: italic;
    color: #aaa;
}

.chip {
    display: inline-flex;
    align-items: center;
    height: 27px;
    margin-top: 8.500px;
    padding-left: 17px;
    border: 1.500px solid #0d6fd8;
    border-radius: 14px;
    color: #0d6fd8;
    white-space: nowrap;
}

.chip.short {
    height: 26px;
    margin-top: 9.500px;
}

.chip.short .ico {
    margin: 0 8px 0 9px;
}

.chip.full {
    width: 196px;
}

.chip-text {
    display: block;
    width: 136px;
    overflow: hidden;
}

.chip .ico {
    width: 24px;
    height: 24px;
    margin: 0 5px 0 8px;
}

.toggle {
    position: relative;
    width: 55px;
    height: 20px;
    margin-top: 11.500px;
    background: #bdbdbd;
    border-radius: 10px;
}

.toggle i {
    position: absolute;
    left: -4px;
    top: -4px;
    width: 28px;
    height: 28px;
    border-radius: 50%;
    background: #fff;
    box-shadow: 0 2px 4px rgba(0, 0, 0, 0.35);
}

.pick {
    padding: 0;
    justify-content: space-between;
}

.pick-btn {
    width: 39px;
    height: 100%;
    border-left: 1px solid #ddd;
    color: #555;
    font-size: 13px;
    letter-spacing: 1px;
    display: flex;
    align-items: center;
    justify-content: center;
}

.section-title {
    display: flex;
    align-items: center;
    margin: 38.500px 0 0;
    font-size: 19px;
    line-height: 28px;
    letter-spacing: 0;
    font-weight: 500;
    color: #222;
}

.section-title svg {
    width: 24px;
    height: 24px;
    fill: #555;
    margin: 0 6px 0 -14px;
}

.terms {
    display: flex;
    margin-top: 28.500px;
}

.terms label {
    width: 228px;
    padding-left: 22px;
}

.vscroll {
    width: 6px;
    flex: none;
    margin-right: 12px;
    background: #ececec;
}

.vscroll-thumb {
    height: 325px;
    background: #c8c8c8;
}

.detail-foot {
    height: 15px;
    flex: none;
    background: #f2f2f2;
    border-top: 1px solid #ddd;
}
```
